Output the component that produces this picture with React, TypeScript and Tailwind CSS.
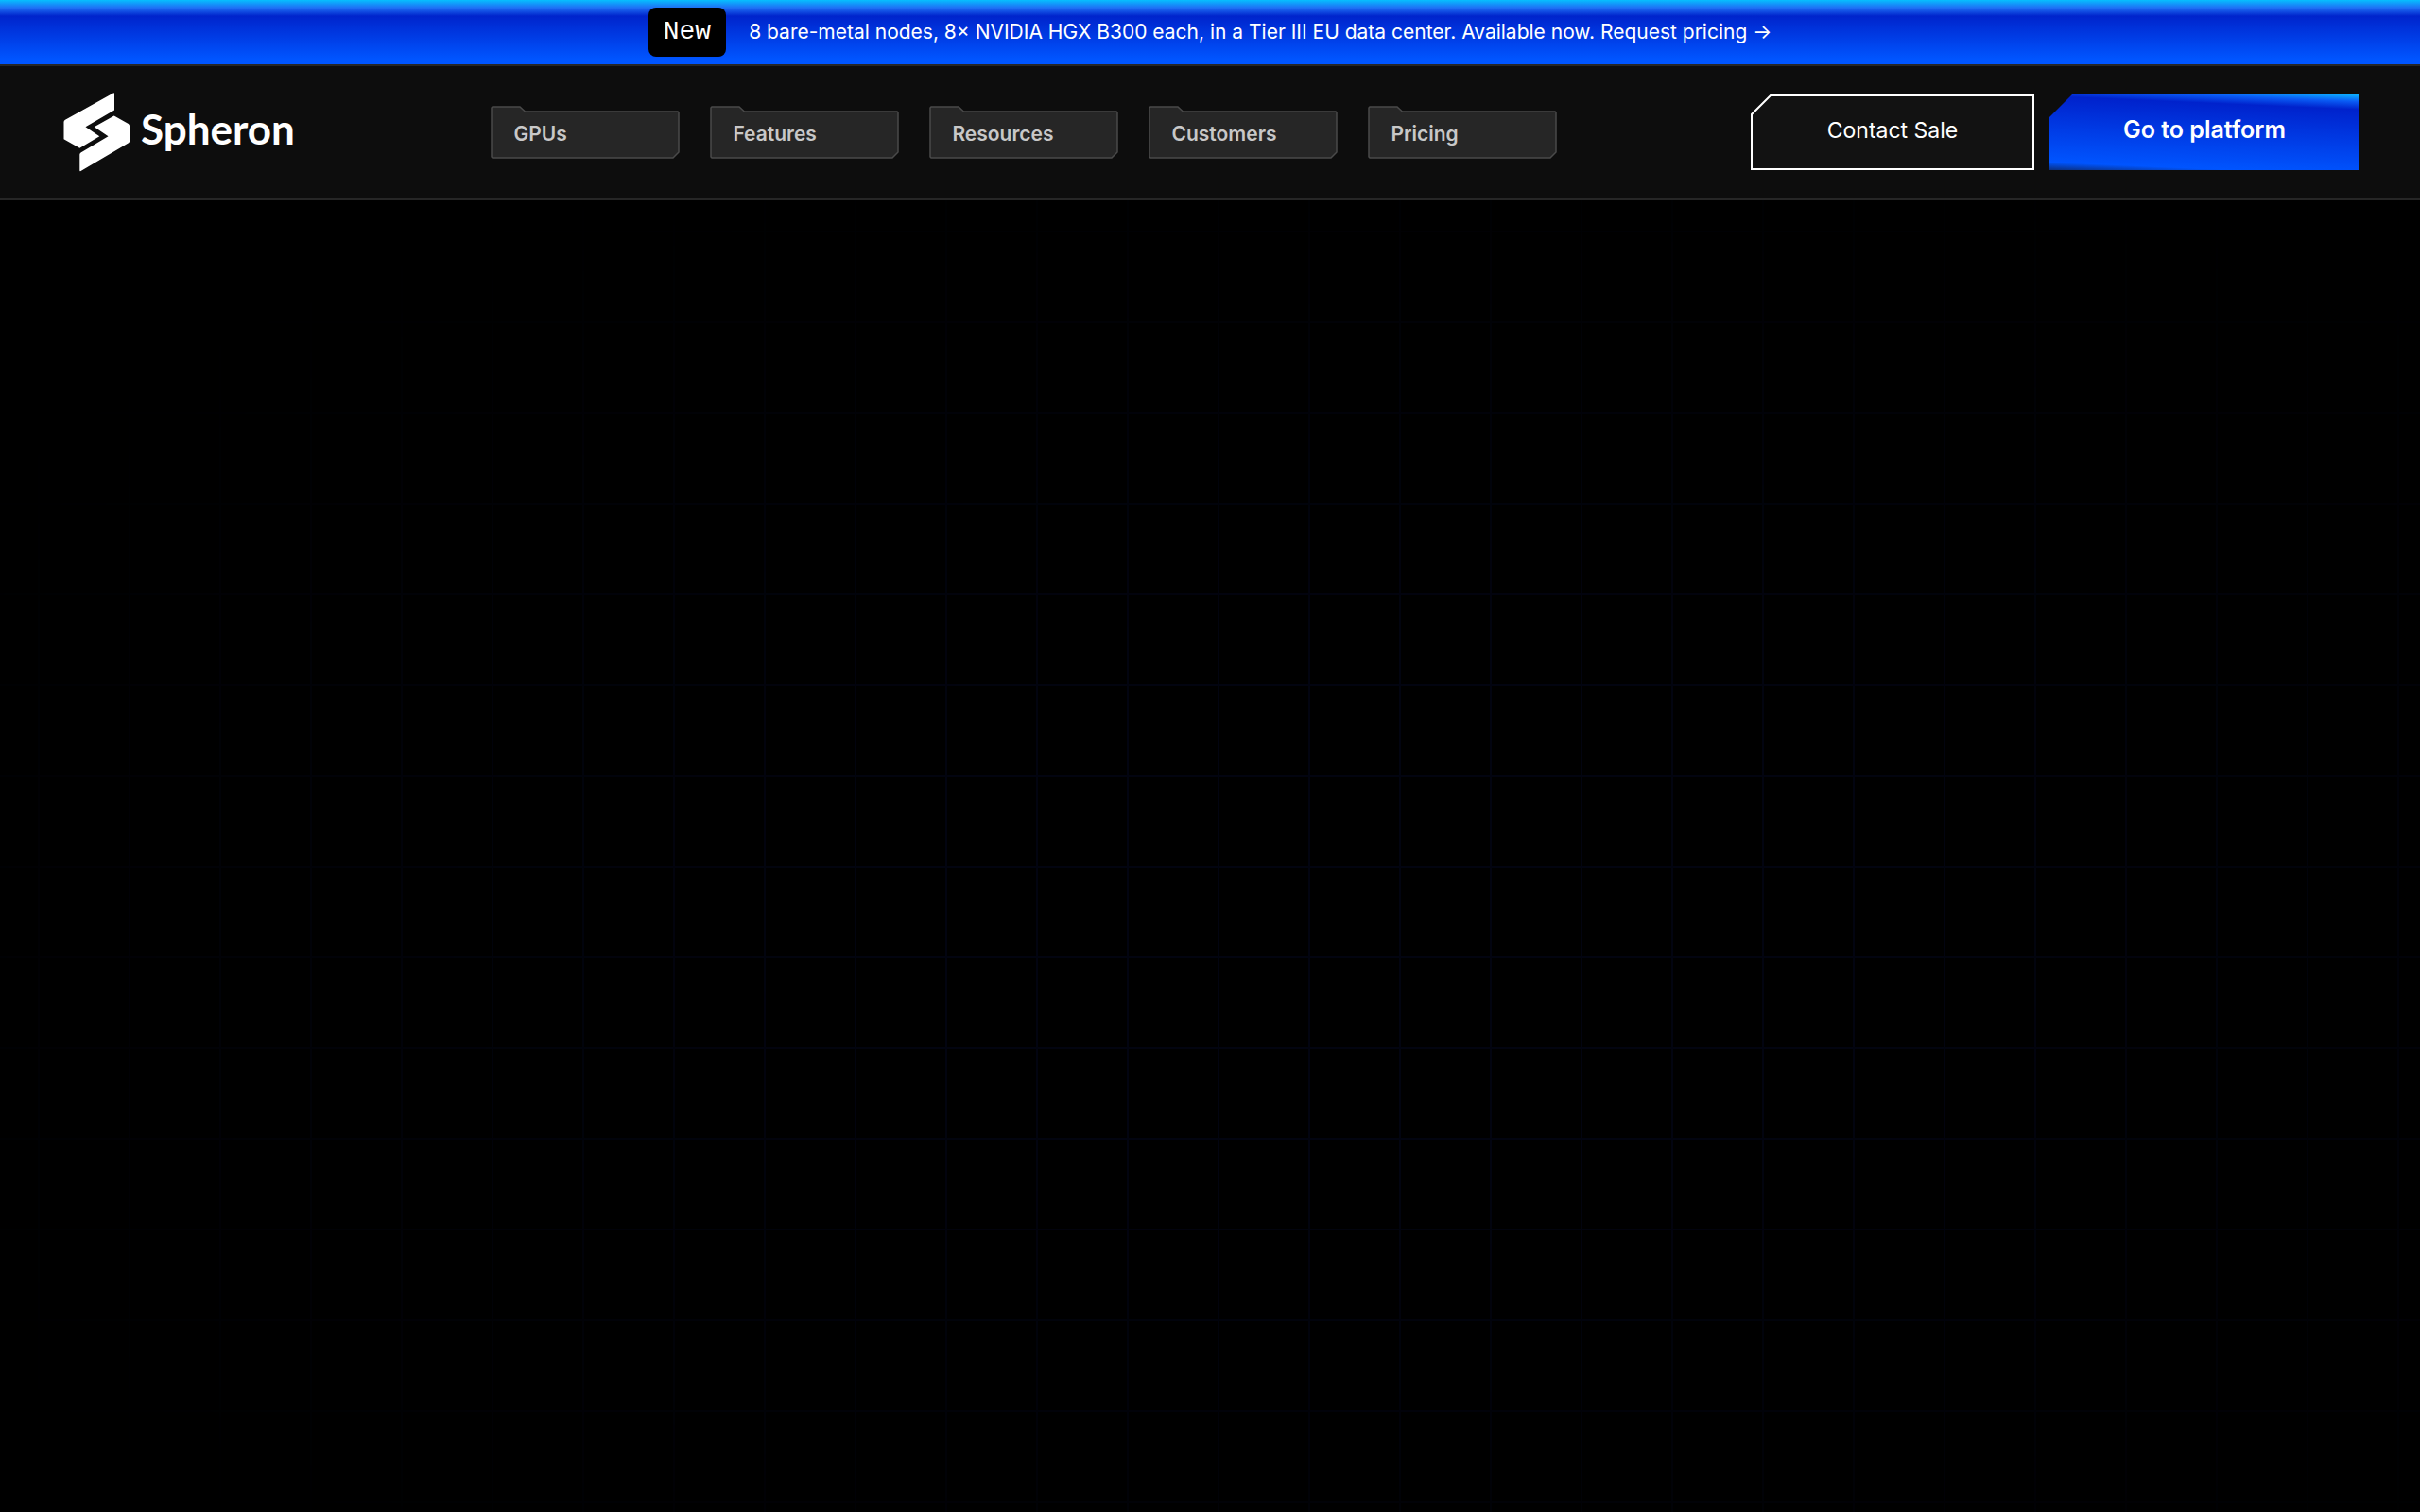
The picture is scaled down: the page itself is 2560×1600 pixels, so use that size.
const navItems = ["GPUs", "Features", "Resources", "Customers", "Pricing"];

function Logo() {
  return (
    <a href="#" aria-label="Spheron" className="flex items-center gap-3 px-[3px] text-white">
      <svg width="70" height="84" viewBox="0 0 70 84" fill="currentColor" aria-hidden="true">
        <path d="M52.800 0.500Q54 0 54 1V18.500L23.500 36.300L38.300 46.300L17.300 58.700L0.500 49.300V31Q0.500 29.600 2 28.800Z" />
        <path d="M53.700 24.500L68.800 33Q70 34 70 35V51.500Q70 52.500 69 53.200L18.500 83Q17.300 83.500 17.300 82.300V65.500Q17.300 64.300 18.500 63.500L47.500 46.300L32.700 36.300Z" />
      </svg>
      <span className="pb-2 font-['Lato',sans-serif] text-[44px] leading-[48px] font-bold">Spheron</span>
    </a>
  );
}

function FolderTab({ label }: { label: string }) {
  return (
    <button type="button" className="relative flex h-14 w-[200px] items-center pt-1 pl-6 text-left">
      <svg className="absolute inset-0" width="200" height="56" viewBox="0 0 200 56" aria-hidden="true">
        <path
          d="M2 1H31L36.500 6H198L199 7V49L193 55H2L1 54V2Z"
          fill="#262626"
          stroke="#4a4a4a"
          strokeWidth="1.500"
        />
      </svg>
      <span className="relative text-[21px] font-semibold text-[#c8c8c8]">{label}</span>
    </button>
  );
}

export default function App() {
  return (
    <div className="flex min-h-screen flex-col bg-black font-['Inter',sans-serif] text-white">
      <a
        href="#"
        className="flex items-center justify-center gap-6 border-b-2 border-[#262626] bg-[linear-gradient(180deg,#06bfff_0%,#1f6ff5_12%,#0024cc_25%,#0055ff_92%,#0055ff_100%)] py-2"
      >
        <span className="rounded-lg bg-black px-4 py-2 font-['Liberation_Mono',monospace] text-[28px] leading-9">New</span>
        <span className="text-[21px]">
          8 bare-metal nodes, 8× NVIDIA HGX B300 each, in a Tier III EU data center. Available now. Request pricing →
        </span>
      </a>
      <header className="flex items-center justify-between border-b-2 border-[#262626] bg-[#0d0d0d] px-16 py-7">
        <Logo />
        <nav className="flex items-center gap-8">
          {navItems.map((label) => (
            <FolderTab key={label} label={label} />
          ))}
        </nav>
        <div className="flex gap-4">
          <button type="button" className="relative flex h-20 w-[300px] items-center justify-center pb-1">
            <svg className="absolute inset-0" width="300" height="80" viewBox="0 0 300 80" aria-hidden="true">
              <path d="M21 1H299V79H1V21Z" fill="#121212" stroke="#fff" strokeWidth="2" />
            </svg>
            <span className="relative text-[23px]">Contact Sale</span>
          </button>
          <button
            type="button"
            className="flex h-20 w-[328px] items-center justify-center bg-[linear-gradient(182.5deg,#0cb4ff_0%,#0a5cf5_8%,#0022cc_17%,#0055ff_91%,#0a2f80_100%)] pb-1 text-[25px] font-semibold [clip-path:polygon(24px_0,100%_0,100%_100%,0_100%,0_24px)]"
          >
            Go to platform
          </button>
        </div>
      </header>
      <main className="grow bg-[linear-gradient(#020410_2px,transparent_2px),linear-gradient(90deg,#020410_2px,transparent_2px)] bg-[size:96px_96px] bg-[position:40px_32px] [mask-image:radial-gradient(ellipse_70%_64%_at_58%_55%,black_30%,transparent_100%)]" />
    </div>
  );
}
